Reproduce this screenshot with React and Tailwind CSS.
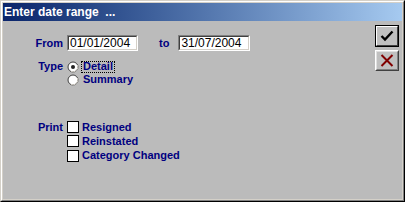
import React from "react";

const lbl = "w-[60px] mr-[4px] text-right text-[11px] font-bold text-[#000080] leading-none";
const opt = "text-[11px] font-bold text-[#000080] leading-none";

function DateInput({ value, w }) {
  return (
    <div className={`${w} h-[16px] border border-t-[#808080] border-l-[#808080] border-b-white border-r-white`}>
      <div className="w-full h-full border border-t-[#404040] border-l-[#404040] border-b-[#d4d0c8] border-r-[#d4d0c8] bg-white flex items-center pl-[1px]">
        <span className="text-[12px] text-black leading-none">{value}</span>
      </div>
    </div>
  );
}

function Radio({ checked }) {
  return (
    <svg width="12" height="12" viewBox="0 0 12 12" className="block">
      <circle cx="6" cy="6" r="5" fill="white" stroke="#404040" strokeWidth="1" />
      <path d="M10.5 4 A5 5 0 0 1 4 10.5" stroke="#d4d0c8" strokeWidth="1" fill="none" />
      {checked && <circle cx="6" cy="6" r="2" fill="#222" />}
    </svg>
  );
}

function Check() {
  return <div className="w-[12px] h-[12px] border border-black bg-white" />;
}

export default function App() {
  return (
    <div
      className="w-[405px] h-[202px] border border-t-[#d4d0c8] border-l-[#d4d0c8] border-r-black border-b-black"
      style={{ fontFamily: '"Liberation Sans", Arial, sans-serif' }}
    >
      <div className="w-full h-full border border-t-white border-l-white border-r-[#808080] border-b-[#808080] bg-[#d4d0c8] p-[1px] flex flex-col">
        <div className="h-[18px] bg-gradient-to-r from-[#0a246a] to-[#a6caf0] flex items-center pl-[1px]">
          <span className="text-white text-[12px] font-bold leading-none whitespace-pre">Enter date range  ...</span>
        </div>
        <div className="flex-1 bg-[#bbbbbb] flex">
          <div className="flex-1 flex flex-col">
            <div className="mt-[14px] h-[16px] flex items-center">
              <span className={lbl}>From</span>
              <DateInput value="01/01/2004" w="w-[71px]" />
              <span className={`${opt} ml-[21px] mr-[9px]`}>to</span>
              <DateInput value="31/07/2004" w="w-[72px]" />
            </div>
            <div className="mt-[9px] flex">
              <span className={`${lbl} h-[13px] flex items-center justify-end`}>Type</span>
              <div className="flex flex-col">
                <div className="h-[13px] flex items-center">
                  <Radio checked />
                  <span className={`${opt} ml-[2px] border border-dotted border-black h-[12px] flex items-center px-[1px]`}>Detail</span>
                </div>
                <div className="h-[13px] flex items-center">
                  <Radio />
                  <span className={`${opt} ml-[4px]`}>Summary</span>
                </div>
              </div>
            </div>
            <div className="mt-[34px] flex">
              <span className={`${lbl} h-[14px] flex items-center justify-end`}>Print</span>
              <div className="flex flex-col">
                <div className="h-[14px] flex items-center">
                  <Check />
                  <span className={`${opt} ml-[3px]`}>Resigned</span>
                </div>
                <div className="h-[14px] flex items-center">
                  <Check />
                  <span className={`${opt} ml-[3px]`}>Reinstated</span>
                </div>
                <div className="h-[15px] flex items-center">
                  <Check />
                  <span className={`${opt} ml-[3px]`}>Category Changed</span>
                </div>
              </div>
            </div>
          </div>
          <div className="flex flex-col pt-[4px] pr-[3px] gap-[3px]">
            <div className="w-[24px] h-[22px] border border-black">
              <div className="w-full h-full border border-t-white border-l-white border-r-[#404040] border-b-[#404040] bg-[#c0c0c0] flex items-center justify-center">
                <svg width="14" height="12" viewBox="0 0 14 12">
                  <path d="M1.5 6 L5 9.5 L12.5 1.5" stroke="black" strokeWidth="2.4" fill="none" />
                </svg>
              </div>
            </div>
            <div className="w-[24px] h-[21px] border border-t-white border-l-white border-r-[#404040] border-b-[#404040]">
              <div className="w-full h-full border border-t-[#e0e0e0] border-l-[#e0e0e0] border-r-[#808080] border-b-[#808080] bg-[#c0c0c0] flex items-center justify-center">
                <svg width="14" height="13" viewBox="0 0 14 13">
                  <path d="M1.5 1 L12.5 12 M12.5 1 L1.5 12" stroke="#800000" strokeWidth="2" fill="none" />
                </svg>
              </div>
            </div>
          </div>
        </div>
      </div>
    </div>
  );
}
